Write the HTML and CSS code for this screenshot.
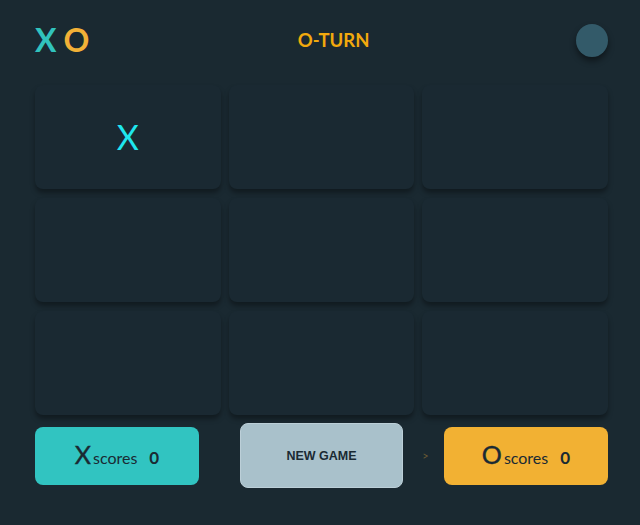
FILE: index.html
```html
<!DOCTYPE html>
<html lang="en">
<head>
<meta charset="utf-8">
<title>Tic Tac Toe</title>
<link rel="stylesheet" href="styles.css">
</head>
<body>
<div class="app">
  <header class="header">
    <div class="logo"><span class="logo-x">X</span><span class="logo-o">O</span></div>
    <div class="turn">O-TURN</div>
    <button class="theme-toggle" aria-label="toggle"></button>
  </header>
  <main class="board">
    <div class="cell"><span class="mark-x">X</span></div>
    <div class="cell"></div>
    <div class="cell"></div>
    <div class="cell"></div>
    <div class="cell"></div>
    <div class="cell"></div>
    <div class="cell"></div>
    <div class="cell"></div>
    <div class="cell"></div>
  </main>
  <footer class="footer">
    <div class="col col-left">
      <div class="score score-x"><span class="score-mark">X</span><span class="score-label">scores</span><span class="score-num">0</span></div>
    </div>
    <div class="col col-mid">
      <button class="new-game">NEW GAME</button>
    </div>
    <div class="col col-right">
      <span class="arrow">&gt;</span>
      <div class="score score-o"><span class="score-mark">O</span><span class="score-label">scores</span><span class="score-num">0</span></div>
    </div>
  </footer>
</div>
</body>
</html>
```
FILE: styles.css
```css
* { box-sizing: border-box; }
html, body {
  margin: 0;
  background: #1a2931;
  font-family: Lato, "Open Sans", sans-serif;
}
.app {
  width: 640px;
  height: 525px;
  padding: 23px 32px 0 35px;
}
.header {
  display: flex;
  align-items: center;
  justify-content: space-between;
  height: 34px;
}
.logo {
  display: flex;
  font-size: 32px;
  font-weight: 700;
  line-height: 1;
}
.logo-x { color: #31c3bd; }
.logo-o { color: #f2b137; margin-left: 7px; }
.turn {
  color: #f2a90d;
  font-size: 18.5px;
  font-weight: 700;
  margin-left: 2px;
}
.theme-toggle {
  width: 32px;
  height: 33px;
  border-radius: 50%;
  border: none;
  padding: 0;
  background: #335a69;
  box-shadow: 0 4px 6px rgba(0, 0, 0, 0.45);
}
.board {
  margin-top: 28px;
  display: grid;
  grid-template-columns: repeat(3, 1fr);
  grid-template-rows: repeat(3, 104px);
  gap: 9px 8px;
}
.cell {
  background: #1a2932;
  border-radius: 8px;
  box-shadow: 0 4px 5px rgba(0, 0, 0, 0.35);
  display: flex;
  align-items: center;
  justify-content: center;
}
.mark-x {
  color: #1fe6ee;
  font-size: 34px;
  line-height: 1;
}
.footer {
  margin-top: 8px;
  display: grid;
  grid-template-columns: repeat(3, 1fr);
  gap: 8px;
  height: 65px;
  align-items: center;
}
.col { display: flex; align-items: center; }
.col-mid { justify-content: center; }
.col-right { justify-content: space-between; }
.score {
  width: 164px;
  height: 58px;
  border-radius: 8px;
  display: flex;
  align-items: center;
  justify-content: center;
  color: #1a2a33;
}
.score-x { background: #31c4c1; }
.score-o { background: #f2b133; }
.score-mark {
  font-size: 25px;
  line-height: 1;
  margin-top: -2px;
  -webkit-text-stroke: 0.4px #1a2a33;
}
.score-label {
  font-size: 16px;
  margin-left: 2px;
  margin-top: 4px;
}
.score-num {
  font-size: 17px;
  font-weight: 700;
  margin-left: 12px;
  margin-top: 3px;
}
.new-game {
  width: 163px;
  height: 65px;
  border: 1px solid #bccfd8;
  border-radius: 8px;
  background: #a9c1cb;
  color: #1a2a33;
  font-family: "Liberation Sans", Arial, sans-serif;
  font-weight: 700;
  font-size: 12.5px;
  padding: 0;
}
.arrow {
  color: #6a5a34;
  font-size: 11px;
  line-height: 1;
}
```
